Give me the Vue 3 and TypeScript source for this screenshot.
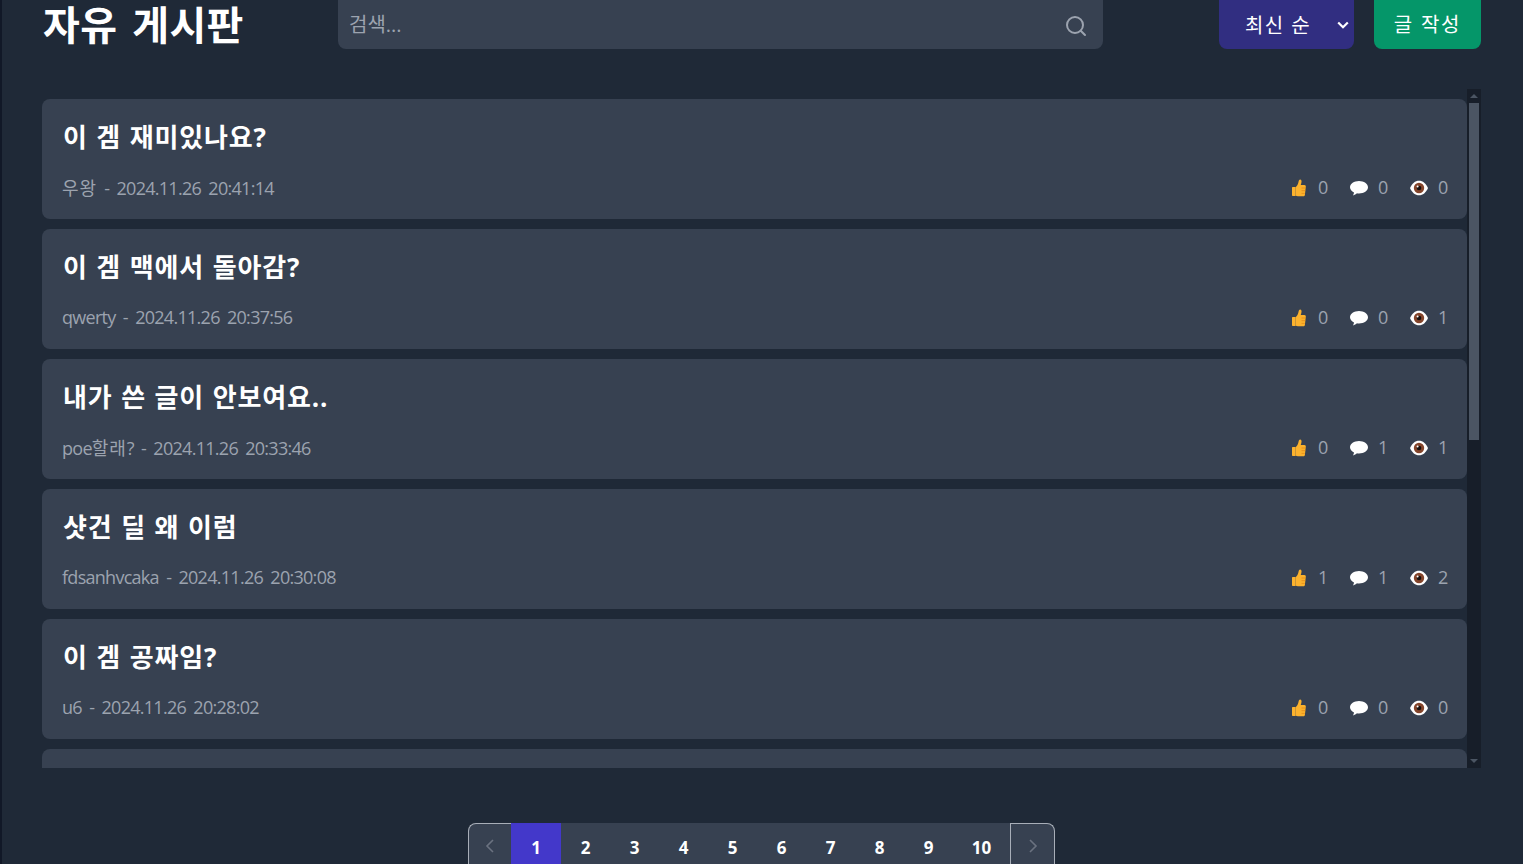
<template>
  <div class="board">
    <header class="top">
      <h1 class="title">자유 게시판</h1>
      <div class="search">
        <input class="search-input" type="text" placeholder="검색..." />
        <svg class="search-icon" viewBox="0 0 24 24" fill="none" stroke="currentColor" stroke-width="2" stroke-linecap="round">
          <circle cx="11" cy="11" r="8" />
          <path d="M21 21l-4.300-4.300" />
        </svg>
      </div>
      <div class="sort">
        <select class="sort-select">
          <option>최신 순</option>
          <option>인기 순</option>
        </select>
        <svg class="sort-arrow" viewBox="0 0 12 8" fill="none" stroke="currentColor" stroke-width="2.200">
          <path d="M1.200 1.500L6 6.200l4.800-4.700" />
        </svg>
      </div>
      <button class="write" type="button">글 작성</button>
    </header>

    <section class="list-wrap">
      <ul class="list">
        <li v-for="post in posts" :key="post.title" class="card">
          <h2 class="card-title">{{ post.title }}</h2>
          <div class="card-meta">
            <span class="meta-text">
              <span
                v-for="run in splitRuns(post.author)"
                :key="run"
                :class="{ ko: isHangul(run) }"
              >{{ run }}</span> - {{ post.date }}
            </span>
            <div class="stats">
              <span class="stat">
                <svg class="ico" viewBox="0 0 18 18">
                  <g transform="translate(1 0)">
                    <path d="M2 8h2.500v9H2c-.6 0-1-.4-1-1V9c0-.6.4-1 1-1z" fill="#fcb22d" />
                    <path d="M4.500 8.300c1.600-1.300 2.600-3.200 3-5.400.2-1.300.7-2.400 1.700-2.400s1.500 1 1.300 2.400c-.1 1-.4 2-.8 3h3.600c1.100 0 1.700.8 1.500 1.700l-.9 8.300c-.1.800-.8 1.400-1.600 1.400H7c-1 0-1.800-.3-2.500-.8z" fill="#fcb22d" />
                    <path d="M10.500 9h4M10.500 11.700h3.700M10.500 14.400h3.300" stroke="#e8901a" stroke-width=".9" fill="none" />
                  </g>
                </svg>
                <span class="num">{{ post.likes }}</span>
              </span>
              <span class="stat">
                <svg class="ico" viewBox="0 0 18 18">
                  <path d="M9 2c4.900 0 9 2.800 9 6.300s-4.100 6.200-9 6.200c-.7 0-1.400 0-2.100-.2-1 1.100-2.300 1.800-4 2.200.7-.9 1-1.900 1.100-3C1.700 12.400 0 10.500 0 8.300 0 4.800 4.100 2 9 2z" fill="#fff" />
                </svg>
                <span class="num">{{ post.comments }}</span>
              </span>
              <span class="stat">
                <svg class="ico" viewBox="0 0 18 18">
                  <path d="M0 9C2 4.300 5.200 1.700 9 1.700s7 2.600 9 7.300c-2 4.700-5.200 7.300-9 7.300S2 13.700 0 9z" fill="#fff" />
                  <circle cx="9" cy="9" r="5.200" fill="#84452b" />
                  <circle cx="9" cy="9" r="2.300" fill="#17100e" />
                  <circle cx="7.600" cy="7.400" r="1" fill="#fff" />
                </svg>
                <span class="num">{{ post.views }}</span>
              </span>
            </div>
          </div>
        </li>
      </ul>
      <div class="scroll-track">
        <span class="arrow arrow-up"></span>
        <div class="scroll-body"><div class="scroll-thumb"></div></div>
        <span class="arrow arrow-down"></span>
      </div>
    </section>

    <nav class="pager">
      <button class="page-btn prev" type="button">
        <svg viewBox="0 0 10 16" fill="none" stroke="currentColor" stroke-width="1.600"><path d="M8 2L2 8l6 6" /></svg>
      </button>
      <button
        v-for="n in pages"
        :key="n"
        class="page-num"
        :class="{ active: n === current, wide: n === 10 }"
        type="button"
      >{{ n }}</button>
      <button class="page-btn next" type="button">
        <svg viewBox="0 0 10 16" fill="none" stroke="currentColor" stroke-width="1.600"><path d="M2 2l6 6-6 6" /></svg>
      </button>
    </nav>
  </div>
</template>

<script setup lang="ts">
interface Post {
  title: string
  author: string
  date: string
  likes: number
  comments: number
  views: number
}

const posts: Post[] = [
  { title: '이 겜 재미있나요?', author: '우왕', date: '2024.11.26 20:41:14', likes: 0, comments: 0, views: 0 },
  { title: '이 겜 맥에서 돌아감?', author: 'qwerty', date: '2024.11.26 20:37:56', likes: 0, comments: 0, views: 1 },
  { title: '내가 쓴 글이 안보여요..', author: 'poe할래?', date: '2024.11.26 20:33:46', likes: 0, comments: 1, views: 1 },
  { title: '샷건 딜 왜 이럼', author: 'fdsanhvcaka', date: '2024.11.26 20:30:08', likes: 1, comments: 1, views: 2 },
  { title: '이 겜 공짜임?', author: 'u6', date: '2024.11.26 20:28:02', likes: 0, comments: 0, views: 0 },
  { title: '다음 글', author: 'guest', date: '2024.11.26 20:20:11', likes: 0, comments: 0, views: 0 }
]

const pages: number[] = [1, 2, 3, 4, 5, 6, 7, 8, 9, 10]
const current = 1

// 한글만 자간을 다르게 주기 위해 나눔
const splitRuns = (s: string): string[] => s.match(/[가-힣]+|[^가-힣]+/g) ?? []
const isHangul = (s: string): boolean => /[가-힣]/.test(s)
</script>

<style>
html,
body {
  margin: 0;
  overflow: hidden;
  background: #1f2937;
}
</style>

<style scoped>
.board {
  height: 864px;
  overflow: hidden;
  box-sizing: border-box;
  padding: 0 42px 0 40px;
  border-left: 2px solid #111827;
  background: #1f2937;
  color: #fff;
  font-family: "Open Sans", "Noto Sans CJK KR", sans-serif;
}

.top {
  height: 49px;
  display: flex;
  align-items: stretch;
}

.title {
  width: 296px;
  margin: 0;
  padding-left: 1px;
  box-sizing: border-box;
  font-size: 40px;
  font-weight: 700;
  line-height: 49px;
  letter-spacing: 0.4px;
  word-spacing: 4px;
}

.search {
  position: relative;
  width: 765px;
  margin-right: 116px;
}

.search-input {
  width: 100%;
  height: 100%;
  box-sizing: border-box;
  padding: 0 50px 0 11px;
  border: 0;
  border-radius: 0 0 8px 8px;
  outline: none;
  background: #374151;
  color: #fff;
  font: inherit;
  font-size: 20px;
}

.search-input::placeholder {
  color: #9ca3af;
}

.search-icon {
  position: absolute;
  top: 14px;
  right: 15px;
  width: 24px;
  height: 24px;
  color: #9ca3af;
}

.sort {
  position: relative;
  width: 135px;
}

.sort-select {
  width: 100%;
  height: 100%;
  padding: 2px 0 0 26px;
  border: 0;
  border-radius: 0 0 8px 8px;
  outline: none;
  appearance: none;
  background: #312e81;
  color: #fff;
  font: inherit;
  font-size: 20px;
  letter-spacing: 1.4px;
}

.sort-arrow {
  position: absolute;
  top: 21px;
  right: 5px;
  width: 12px;
  height: 8px;
  color: #fff;
}

.write {
  width: 107px;
  margin-left: 20px;
  padding: 0 0 2px;
  border: 0;
  border-radius: 0 0 8px 8px;
  background: #059669;
  color: #fff;
  font: inherit;
  font-size: 20px;
  letter-spacing: 1.8px;
}

.list-wrap {
  height: 679px;
  margin-top: 40px;
  display: flex;
}

.list {
  flex: 1;
  margin: 0;
  padding: 10px 0 0;
  list-style: none;
  overflow: hidden;
}

.card {
  height: 120px;
  box-sizing: border-box;
  margin-bottom: 10px;
  padding: 20px 20px 0;
  border-radius: 8px;
  background: #374151;
}

.card-title {
  margin: 0;
  padding-left: 1px;
  font-size: 26px;
  font-weight: 700;
  line-height: 36px;
  letter-spacing: 0.85px;
  word-spacing: 1px;
}

.card-meta {
  margin-top: 18px;
  height: 28px;
  display: flex;
  align-items: center;
  justify-content: space-between;
  color: #9ca3af;
  font-size: 18px;
}

.meta-text {
  letter-spacing: -0.72px;
  word-spacing: 3.3px;
}

.ko {
  letter-spacing: 0.9px;
}

.stats {
  display: flex;
  gap: 23px;
}

.stat {
  display: flex;
  align-items: center;
  gap: 10px;
}

.num {
  width: 9px;
  letter-spacing: -0.6px;
}

.ico {
  width: 18px;
  height: 18px;
  flex: none;
  margin-top: 1px;
}

.scroll-track {
  width: 14px;
  display: flex;
  flex-direction: column;
  background: #171e29;
}

.arrow {
  height: 14px;
  display: flex;
  align-items: center;
  justify-content: center;
}

.arrow::before {
  content: "";
  border-left: 4px solid transparent;
  border-right: 4px solid transparent;
}

.arrow-up::before {
  border-bottom: 4px solid #4b5563;
}

.arrow-down::before {
  border-top: 4px solid #4b5563;
}

.scroll-body {
  flex: 1;
  padding: 0 2px;
}

.scroll-thumb {
  height: 337px;
  background: #4b5563;
}

.pager {
  margin-top: 55px;
  display: flex;
  justify-content: center;
}

.page-btn,
.page-num {
  height: 48px;
  padding: 0;
  border: 0;
  background: #374151;
  color: #fff;
  font: inherit;
  font-size: 17px;
  font-weight: 700;
}

.page-num {
  width: 49px;
}

.page-num.active {
  width: 50px;
  background: #4338ca;
}

.page-num.wide {
  width: 57px;
}

.page-btn {
  width: 43px;
  box-sizing: border-box;
  border: 1px solid #a8aeb8;
  border-bottom: 0;
  color: #6b7280;
  display: flex;
  align-items: flex-start;
  justify-content: center;
  padding-top: 14px;
}

.page-btn svg {
  width: 10px;
  height: 16px;
}

.prev {
  border-right: 0;
  border-radius: 8px 0 0 0;
}

.next {
  width: 45px;
  border-radius: 0 8px 0 0;
}
</style>
